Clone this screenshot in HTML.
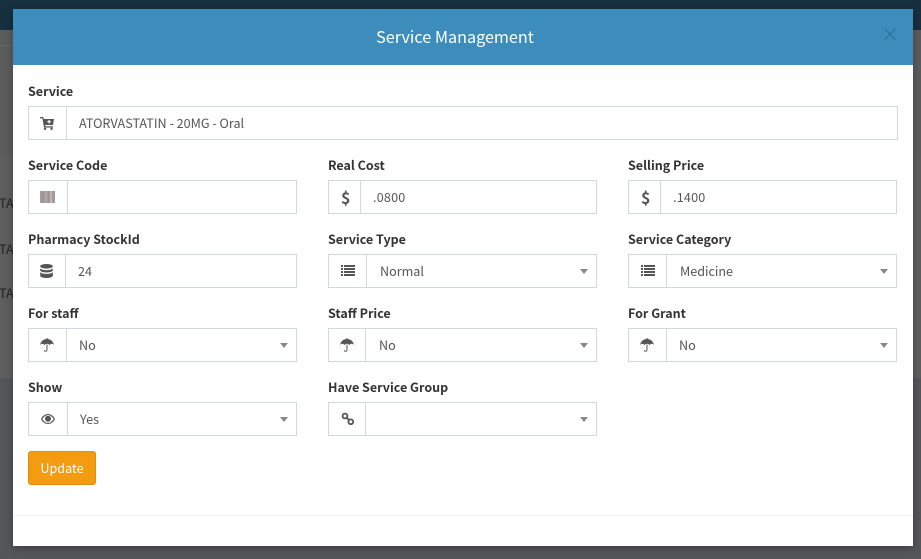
<!DOCTYPE html>
<html><head><meta charset="utf-8"><style>
*{box-sizing:border-box}
html,body{margin:0;padding:0;width:921px;height:559px;overflow:hidden;background:#555658;font-family:"Noto Sans CJK SC","Liberation Sans",sans-serif;font-size:12.6px;color:#555}
div,span,svg{position:absolute}
.m{left:13px;top:9px;width:900px;height:537px;background:#fff;box-shadow:0 2px 8px rgba(0,0,0,.3)}
.l{font-weight:700;font-size:12.5px;color:#333;line-height:20px;height:20px;white-space:nowrap}
.b{height:34px;border:1px solid #d2d6de;background:#fff}
.d{top:0;bottom:0;width:1px;background:#d2d6de}
.t{line-height:32px;top:0;white-space:nowrap;color:#555}
.a{width:0;height:0;border-left:4px solid transparent;border-right:4px solid transparent;border-top:5px solid #888;top:14px}
svg{fill:#555}
</style></head><body>
<div style="left:0;top:0;width:921px;height:30px;background:#17303f"></div>
<div style="left:0;top:30px;width:921px;height:128px;background:#5c5c5c"></div>
<div style="left:0;top:158px;width:921px;height:220px;background:#5e5e5e"></div>
<div style="left:-1px;top:195px;color:#222;line-height:16px">TAT</div>
<div style="left:-1px;top:241px;color:#222;line-height:16px">TAT</div>
<div style="left:-1px;top:285px;color:#222;line-height:16px">TAT</div>
<div style="left:0;top:45px;width:13px;height:1px;background:#666"></div>
<div class="m"></div>
<div style="left:13px;top:9px;width:900px;height:56px;background:#3c8dbc"></div>
<div style="left:13px;top:23px;width:884px;text-align:center;font-size:16.2px;line-height:26px;color:#fff">Service Management</div>
<div style="left:881px;top:22px;font-size:18px;line-height:24px;color:#2f7299;font-weight:400">×</div>
<div style="left:13px;top:515px;width:900px;height:1px;background:#f4f4f4"></div>

<div class="l" style="left:28px;top:81px">Service</div>
<div class="b" style="left:28px;top:106px;width:870px"><div class="d" style="left:37px"></div><div class="t" style="left:50px">ATORVASTATIN - 20MG - Oral</div>
<svg style="left:11px;top:10px" width="14" height="13" viewBox="0 0 14 13"><path d="M0 0h3l1 2h10l-1 6H5l.4 1.200H13V10.500H4L2.400 1.400H0z"/><circle cx="5" cy="11.800" r="1.200"/><circle cx="11.500" cy="11.800" r="1.200"/><path d="M8.500 3h1.200v1.200H11v1.100H9.700v1.200H8.500V5.300H7.200V4.200h1.300z" fill="#fff"/></svg></div>

<div class="l" style="left:28px;top:155px">Service Code</div>
<div class="b" style="left:28px;top:180px;width:269px"><div class="d" style="left:38px"></div>
<svg style="left:11px;top:10px" width="15" height="12" viewBox="0 0 15 12"><path fill="#b39a86" d="M0 0h15v12H0z"/><path fill="#8f97b3" d="M2 0h2v12H2z"/><path fill="#a8a8b0" d="M5 0h2v12H5z"/><path fill="#8d93ad" d="M8 0h1v12H8z"/><path fill="#c8b4a0" d="M10 0h2v12h-2z"/><path fill="#8fa0bd" d="M13 0h2v12h-2z"/></svg></div>

<div class="l" style="left:328px;top:155px">Real Cost</div>
<div class="b" style="left:328px;top:180px;width:269px"><div class="d" style="left:31px"></div><div class="t" style="left:44px;letter-spacing:.2px">.0800</div>
<div class="t" style="left:12px;font-size:16px;font-weight:700;color:#555">$</div></div>

<div class="l" style="left:628px;top:155px">Selling Price</div>
<div class="b" style="left:628px;top:180px;width:269px"><div class="d" style="left:31px"></div><div class="t" style="left:44px;letter-spacing:.2px">.1400</div>
<div class="t" style="left:12px;font-size:16px;font-weight:700;color:#555">$</div></div>

<div class="l" style="left:28px;top:229px">Pharmacy StockId</div>
<div class="b" style="left:28px;top:254px;width:269px"><div class="d" style="left:36px"></div><div class="t" style="left:49px">24</div>
<svg style="left:11px;top:9px" width="13" height="14" viewBox="0 0 13 14"><ellipse cx="6.500" cy="2.300" rx="6.300" ry="2.300"/><path d="M.2 4.300c1 1.400 3.500 1.900 6.300 1.900s5.300-.5 6.300-1.900v2c0 1.300-2.800 2.200-6.300 2.200S.2 7.600.2 6.300zM.2 8c1 1.400 3.500 1.900 6.300 1.900s5.300-.5 6.300-1.900v3.700c0 1.300-2.800 2.300-6.300 2.300S.2 13 .2 11.700z"/></svg></div>

<div class="l" style="left:328px;top:229px">Service Type</div>
<div class="b" style="left:328px;top:254px;width:269px"><div class="d" style="left:37px"></div><div class="t" style="left:51px">Normal</div><div class="a" style="left:251px"></div>
<svg style="left:12px;top:10px" width="14" height="11" viewBox="0 0 14 11"><path d="M0 0h2v2H0zM3 0h11v2H3zM0 3h2v2H0zM3 3h11v2H3zM0 6h2v2H0zM3 6h11v2H3zM0 9h2v2H0zM3 9h11v2H3z"/></svg></div>

<div class="l" style="left:628px;top:229px">Service Category</div>
<div class="b" style="left:628px;top:254px;width:269px"><div class="d" style="left:37px"></div><div class="t" style="left:51px">Medicine</div><div class="a" style="left:251px"></div>
<svg style="left:12px;top:10px" width="14" height="11" viewBox="0 0 14 11"><path d="M0 0h2v2H0zM3 0h11v2H3zM0 3h2v2H0zM3 3h11v2H3zM0 6h2v2H0zM3 6h11v2H3zM0 9h2v2H0zM3 9h11v2H3z"/></svg></div>

<div class="l" style="left:28px;top:303px">For staff</div>
<div class="b" style="left:28px;top:328px;width:269px"><div class="d" style="left:37px"></div><div class="t" style="left:50px">No</div><div class="a" style="left:251px"></div>
<svg style="left:11px;top:9px" width="14" height="14" viewBox="0 0 14 14"><path d="M6.500 0h1v1C11 1.300 13.500 3.800 14 7c-.8-1-1.600-1.200-2.300-1.200-.8 0-1.600.5-2.200 1.300-.6-.8-1.500-1.300-2.500-1.300s-1.900.5-2.500 1.300C3.900 6.300 3.100 5.800 2.300 5.800 1.600 5.800.8 6 0 7c.5-3.200 3-5.700 6.500-6z"/><path d="M6.500 6.500h1v5.300c0 1.200-.8 2-1.900 2-1 0-1.800-.7-1.800-1.700h1c0 .5.300.8.800.8s.9-.4.900-1z"/></svg></div>

<div class="l" style="left:328px;top:303px">Staff Price</div>
<div class="b" style="left:328px;top:328px;width:269px"><div class="d" style="left:36px"></div><div class="t" style="left:50px">No</div><div class="a" style="left:251px"></div>
<svg style="left:11px;top:9px" width="14" height="14" viewBox="0 0 14 14"><path d="M6.500 0h1v1C11 1.300 13.500 3.800 14 7c-.8-1-1.600-1.200-2.300-1.200-.8 0-1.600.5-2.200 1.300-.6-.8-1.500-1.300-2.500-1.300s-1.900.5-2.500 1.300C3.900 6.300 3.100 5.800 2.300 5.800 1.600 5.800.8 6 0 7c.5-3.200 3-5.700 6.500-6z"/><path d="M6.500 6.500h1v5.300c0 1.200-.8 2-1.900 2-1 0-1.800-.7-1.800-1.700h1c0 .5.300.8.800.8s.9-.4.900-1z"/></svg></div>

<div class="l" style="left:628px;top:303px">For Grant</div>
<div class="b" style="left:628px;top:328px;width:269px"><div class="d" style="left:37px"></div><div class="t" style="left:50px">No</div><div class="a" style="left:251px"></div>
<svg style="left:11px;top:9px" width="14" height="14" viewBox="0 0 14 14"><path d="M6.500 0h1v1C11 1.300 13.500 3.800 14 7c-.8-1-1.600-1.200-2.300-1.200-.8 0-1.600.5-2.200 1.300-.6-.8-1.500-1.300-2.500-1.300s-1.900.5-2.500 1.300C3.900 6.300 3.100 5.800 2.300 5.800 1.600 5.800.8 6 0 7c.5-3.200 3-5.700 6.500-6z"/><path d="M6.500 6.500h1v5.300c0 1.200-.8 2-1.900 2-1 0-1.800-.7-1.800-1.700h1c0 .5.300.8.800.8s.9-.4.900-1z"/></svg></div>

<div class="l" style="left:28px;top:377px">Show</div>
<div class="b" style="left:28px;top:402px;width:269px"><div class="d" style="left:38px"></div><div class="t" style="left:51px">Yes</div><div class="a" style="left:251px"></div>
<svg style="left:12px;top:11px" width="14" height="10" viewBox="0 0 14 10"><path fill-rule="evenodd" d="M7 0c3 0 5.500 1.900 7 5-1.500 3.100-4 5-7 5S1.500 8.100 0 5c1.500-3.100 4-5 7-5zM7 1.100C5 1.100 3.300 2 1.300 5c2 3 3.700 3.900 5.700 3.900S10.700 8 12.700 5C10.700 2 9 1.100 7 1.100z"/><circle cx="7" cy="4.800" r="3"/></svg></div>

<div class="l" style="left:328px;top:377px">Have Service Group</div>
<div class="b" style="left:328px;top:402px;width:269px"><div class="d" style="left:36px"></div><div class="a" style="left:251px"></div>
<svg style="left:12px;top:9px" width="14" height="14" viewBox="0 0 14 14"><circle cx="4" cy="4" r="2.400" fill="none" stroke="#555" stroke-width="1.800"/><circle cx="9.800" cy="9.800" r="2.400" fill="none" stroke="#555" stroke-width="1.800"/><path d="M5.500 5.500l3 3" stroke="#555" stroke-width="1.800"/></svg></div>

<div style="left:28px;top:451px;width:68px;height:34px;background:#f39c12;border:1px solid #e08e0b;border-radius:3px;color:#fff;text-align:center;line-height:32px">Update</div>
</body></html>
